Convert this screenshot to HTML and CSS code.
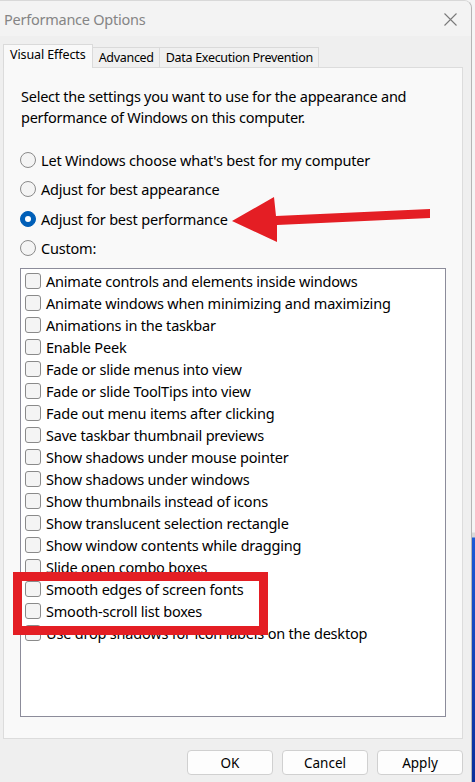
FILE: index.html
```html
<!DOCTYPE html>
<html>
<head>
<meta charset="utf-8">
<title>Performance Options</title>
<link rel="stylesheet" href="styles.css">
</head>
<body>
<div class="window">
  <div class="titlebar">
    <span class="title">Performance Options</span>
    <span class="close">
      <svg width="13" height="13" viewBox="0 0 13 13"><path d="M0.5 0.5 L12.5 12.5 M12.5 0.5 L0.5 12.5" stroke="#7a7a7a" stroke-width="1.1" fill="none"/></svg>
    </span>
  </div>
  <div class="content">
    <div class="tabs">
      <div class="tab active">Visual Effects</div>
      <div class="tab">Advanced</div>
      <div class="tab">Data Execution Prevention</div>
    </div>
    <div class="panel">
      <p class="desc">Select the settings you want to use for the appearance and performance of Windows on this computer.</p>
      <div class="radios">
        <div class="radio-row"><span class="radio"></span><span>Let Windows choose what's best for my computer</span></div>
        <div class="radio-row"><span class="radio"></span><span>Adjust for best appearance</span></div>
        <div class="radio-row"><span class="radio checked"></span><span>Adjust for best performance</span></div>
        <div class="radio-row"><span class="radio"></span><span>Custom:</span></div>
      </div>
      <div class="listbox">
        <div class="check-row"><span class="check"></span><span>Animate controls and elements inside windows</span></div>
        <div class="check-row"><span class="check"></span><span>Animate windows when minimizing and maximizing</span></div>
        <div class="check-row"><span class="check"></span><span>Animations in the taskbar</span></div>
        <div class="check-row"><span class="check"></span><span>Enable Peek</span></div>
        <div class="check-row"><span class="check"></span><span>Fade or slide menus into view</span></div>
        <div class="check-row"><span class="check"></span><span>Fade or slide ToolTips into view</span></div>
        <div class="check-row"><span class="check"></span><span>Fade out menu items after clicking</span></div>
        <div class="check-row"><span class="check"></span><span>Save taskbar thumbnail previews</span></div>
        <div class="check-row"><span class="check"></span><span>Show shadows under mouse pointer</span></div>
        <div class="check-row"><span class="check"></span><span>Show shadows under windows</span></div>
        <div class="check-row"><span class="check"></span><span>Show thumbnails instead of icons</span></div>
        <div class="check-row"><span class="check"></span><span>Show translucent selection rectangle</span></div>
        <div class="check-row"><span class="check"></span><span>Show window contents while dragging</span></div>
        <div class="check-row"><span class="check"></span><span>Slide open combo boxes</span></div>
        <div class="check-row"><span class="check"></span><span>Smooth edges of screen fonts</span></div>
        <div class="check-row"><span class="check"></span><span>Smooth-scroll list boxes</span></div>
        <div class="check-row"><span class="check"></span><span>Use drop shadows for icon labels on the desktop</span></div>
      </div>
    </div>
    <div class="buttons">
      <button class="btn">OK</button>
      <button class="btn">Cancel</button>
      <button class="btn">Apply</button>
    </div>
  </div>
  <div class="highlight-box"></div>
  <svg class="arrow" width="475" height="782" viewBox="0 0 475 782">
    <polygon points="232,221 274,197 276,216 430,209 430,218 277,225 277,242" fill="#e41e24"/>
  </svg>
</div>
</body>
</html>
```

FILE: styles.css
```css
* { box-sizing: border-box; }
html, body { margin: 0; padding: 0; }
body {
  width: 475px;
  height: 782px;
  overflow: hidden;
  background: linear-gradient(to bottom, #f5f5f5 0, #f5f5f5 532px, #d9d9d9 533px, #d9d9d9 537px, #1d5ad6 538px, #0b2f9a 782px);
  font-family: "Noto Sans", "Open Sans", sans-serif;
  color: #000;
}
.window {
  position: relative;
  width: 472px;
  height: 782px;
  background: #efefef;
  border-right: 1px solid #b5b5b5;
  border-top: 1px solid #d8d8d8;
  border-top-right-radius: 8px;
  overflow: hidden;
}
.titlebar {
  height: 35px;
  background: #f3f3f3;
  display: flex;
  align-items: center;
  justify-content: space-between;
  padding-left: 4px;
  padding-right: 14px;
}
.title {
  font-size: 14.5px;
  color: #858585;
  letter-spacing: -0.25px;
}
.close { display: flex; width: 13px; height: 13px; margin-top: 1px; }
.content {
  padding: 8px 8px 0 3px;
}
.tabs {
  display: flex;
  align-items: flex-end;
  height: 23px;
  font-size: 12.5px;
}
.tab {
  height: 20px;
  padding: 0 5px 0 6px;
  border: 1px solid #dadada;
  border-bottom: none;
  background: #f0f0f0;
  display: flex;
  align-items: center;
  margin-left: -1px;
  letter-spacing: -0.3px;
}
.tab.active {
  height: 24px;
  margin-bottom: -1px;
  margin-left: 0;
  background: #f9f9f9;
  padding: 0 6px 0 6px;
  position: relative;
  z-index: 1;
  align-items: flex-start;
  padding-top: 1px;
  letter-spacing: -0.1px;
}
.panel {
  height: 672px;
  border: 1px solid #dcdcdc;
  background: #f9f9f9;
  padding: 18px 15px 0 16px;
}
.desc {
  margin: 0;
  font-size: 14.5px;
  line-height: 21px;
  letter-spacing: -0.25px;
  padding-left: 1px;
  width: 410px;
}
.radios {
  margin-top: 17px;
}
.radio-row {
  height: 29.5px;
  display: flex;
  align-items: center;
  font-size: 14.5px;
  letter-spacing: -0.2px;
}
.radio {
  width: 16px;
  height: 16px;
  border-radius: 50%;
  border: 1px solid #8a8a8a;
  background: #f4f4f4;
  margin-right: 5px;
  flex: none;
  position: relative;
}
.radio.checked {
  border-color: #005fb8;
  background: #005fb8;
}
.radio.checked::after {
  content: "";
  position: absolute;
  left: 4px;
  top: 4px;
  width: 6px;
  height: 6px;
  border-radius: 50%;
  background: #fff;
}
.listbox {
  margin-top: 5px;
  width: 426px;
  height: 449px;
  border: 1px solid #8c8c9a;
  background: #fff;
  padding: 1px 0 0 4px;
}
.check-row {
  height: 22px;
  display: flex;
  align-items: center;
  font-size: 14.5px;
  letter-spacing: -0.2px;
  white-space: nowrap;
}
.check {
  width: 16px;
  height: 16px;
  border: 1px solid #8a8a8a;
  border-radius: 3px;
  background: #f4f4f4;
  margin-right: 5px;
  flex: none;
}
.buttons {
  display: flex;
  justify-content: flex-end;
  gap: 9px;
  margin-top: 11px;
  padding-right: 0;
}
.btn {
  width: 86px;
  height: 25px;
  border: 1px solid #d0d0d0;
  border-radius: 4px;
  background: #fdfdfd;
  font-family: "Noto Sans", "Open Sans", sans-serif;
  font-size: 13.5px;
  color: #000;
  padding: 0;
}
.highlight-box {
  position: absolute;
  left: 13px;
  top: 571px;
  width: 255px;
  height: 63px;
  border: 9px solid #e41e24;
}
.arrow {
  position: absolute;
  left: 0;
  top: -1px;
  pointer-events: none;
}
```
